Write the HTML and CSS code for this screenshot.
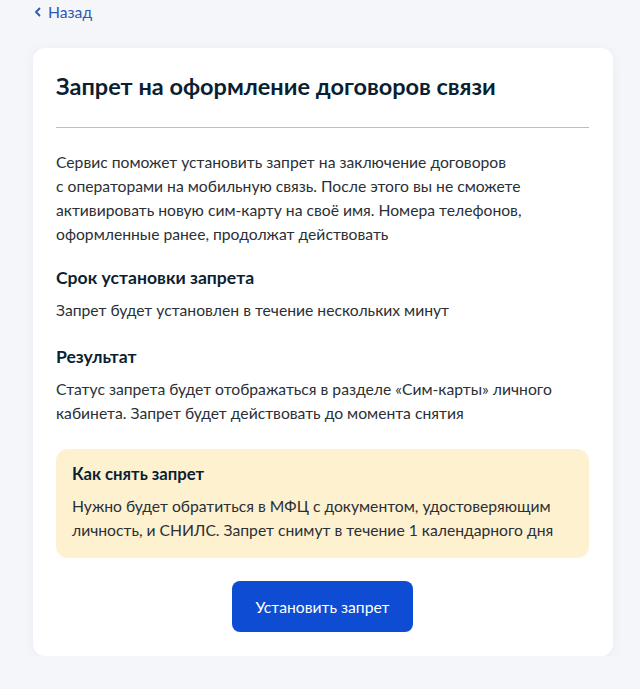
FILE: index.html
```html
<!DOCTYPE html>
<html lang="ru">
<head>
<meta charset="utf-8">
<title>Запрет на оформление договоров связи</title>
<link rel="stylesheet" href="styles.css">
</head>
<body>
<div class="page">
  <a class="back" href="#">
    <svg class="back-icon" width="10" height="10" viewBox="0 0 10 10" aria-hidden="true">
      <path d="M6.5 1.5 L3 5 L6.5 8.5" fill="none" stroke="currentColor" stroke-width="1.8" stroke-linecap="round" stroke-linejoin="round"/>
    </svg>
    <span>Назад</span>
  </a>

  <main class="card">
    <h1 class="title">Запрет на оформление договоров связи</h1>
    <hr class="divider">
    <p class="text">Сервис поможет установить запрет на заключение договоров<br>с операторами на мобильную связь. После этого вы не сможете активировать новую сим-карту на своё имя. Номера телефонов, оформленные ранее, продолжат действовать</p>

    <h2 class="subtitle">Срок установки запрета</h2>
    <p class="text">Запрет будет установлен в течение нескольких минут</p>

    <h2 class="subtitle subtitle-spaced">Результат</h2>
    <p class="text">Статус запрета будет отображаться в разделе «Сим-карты» личного кабинета. Запрет будет действовать до момента снятия</p>

    <section class="notice">
      <h3 class="notice-title">Как снять запрет</h3>
      <p class="text">Нужно будет обратиться в МФЦ с документом, удостоверяющим личность, и СНИЛС. Запрет снимут в течение 1 календарного дня</p>
    </section>

    <div class="actions">
      <button class="btn" type="button">Установить запрет</button>
    </div>
  </main>
</div>
</body>
</html>
```

FILE: styles.css
```css
* { box-sizing: border-box; }

html, body {
  margin: 0;
  padding: 0;
  background: #f4f6fa;
}

body {
  font-family: Lato, "Noto Sans", sans-serif;
  color: #0b1f33;
}

.page {
  width: 580px;
  margin-left: 33px;
  padding-top: 1px;
}

.back {
  display: inline-flex;
  align-items: center;
  gap: 5px;
  color: #2f57b5;
  text-decoration: none;
  font-size: 15.7px;
  line-height: 20px;
}

.back-icon {
  display: block;
}

.card {
  margin-top: 26px;
  background: #ffffff;
  border-radius: 12px;
  box-shadow: 0 2px 12px rgba(30, 60, 120, 0.06);
  padding: 22px 24px 24px 23px;
  height: 608px;
}

.title {
  margin: 0;
  font-size: 23.5px;
  line-height: 32px;
  font-weight: 700;
  color: #0b1f33;
}

.divider {
  border: 0;
  border-top: 1px solid #b4bfcc;
  margin: 25px 0 22px;
}

.text {
  margin: 0;
  font-size: 15.7px;
  line-height: 24px;
  color: #2b2f36;
}

.subtitle {
  margin: 20px 0 8px;
  font-size: 17.6px;
  line-height: 24px;
  font-weight: 700;
  color: #0b1f33;
}

.subtitle-spaced {
  margin-top: 23px;
}

.notice {
  margin-top: 24px;
  background: #fdf1d0;
  border-radius: 12px;
  padding: 13px 16px 16px;
}

.notice-title {
  margin: 0 0 8px;
  font-size: 16.7px;
  line-height: 24px;
  font-weight: 700;
  color: #0b1f33;
}

.actions {
  display: flex;
  justify-content: center;
  margin-top: 23px;
}

.btn {
  width: 181px;
  height: 51px;
  border: 0;
  border-radius: 8px;
  background: #0d4cd3;
  color: #ffffff;
  font-family: inherit;
  font-size: 15.7px;
  cursor: pointer;
}
```
